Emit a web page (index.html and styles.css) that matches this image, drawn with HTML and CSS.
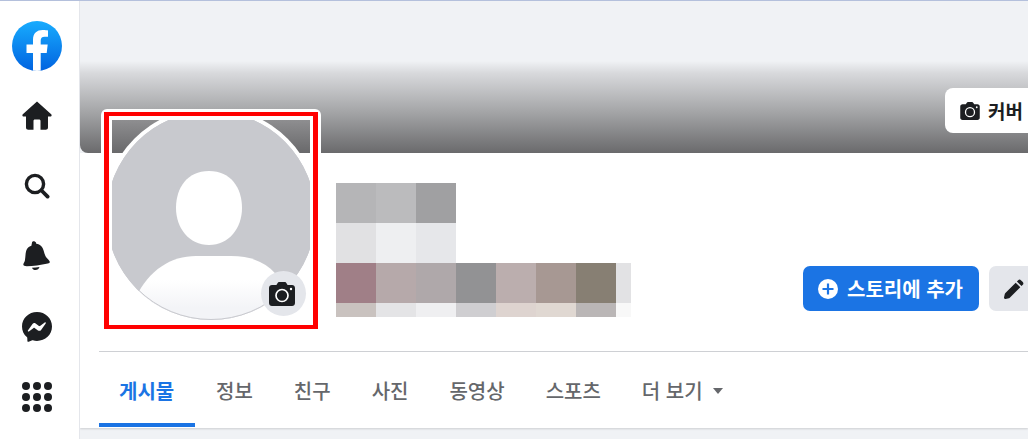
FILE: index.html
```html
<!DOCTYPE html>
<html lang="ko">
<head>
    <meta charset="UTF-8">
    <title>Profile</title>
    <link rel="stylesheet" href="styles.css">
</head>
<body>
    <div class="app">
        <!-- Left icon rail -->
        <nav class="rail">
            <svg class="logo" viewBox="0 0 50 50">
                <defs>
                    <linearGradient id="logoBlue" x1="0" y1="0" x2="0" y2="1">
                        <stop offset="0" stop-color="#18acfe"/>
                        <stop offset="1" stop-color="#0163e0"/>
                    </linearGradient>
                    <clipPath id="logoClip"><circle cx="25" cy="25" r="25"/></clipPath>
                </defs>
                <circle cx="25" cy="25" r="25" fill="url(#logoBlue)"/>
                <path clip-path="url(#logoClip)" fill="#fff" d="M21 50V32h-6.500v-8.500H21v-4.700C21 12.300 24.800 9 30.700 9c2.400 0 4.500.3 5.300.4v6.300h-3.300c-3 0-4 1.400-4 3.700v4.100h7l-1 8.500h-6V50z"/>
            </svg>
            <div class="rail-item">
                <svg width="30" height="29" viewBox="0 0 30 29"><path fill="#1c1e21" d="M15 0.500 0.800 13.200c-.9.900-.3 2.300.9 2.300H4v11c0 1.300 1 2.300 2.300 2.300H11.500v-8.800c0-.8.600-1.400 1.400-1.400h4.200c.8 0 1.400.6 1.400 1.400v8.800h5.200c1.300 0 2.300-1 2.300-2.300v-11h2.300c1.200 0 1.800-1.400.9-2.300z"/></svg>
            </div>
            <div class="rail-item">
                <svg width="26" height="26" viewBox="0 0 26 26"><circle cx="11" cy="11" r="8.600" fill="none" stroke="#1c1e21" stroke-width="3.400"/><path d="M17.500 17.500 23.600 23.600" stroke="#1c1e21" stroke-width="3.800" stroke-linecap="round"/></svg>
            </div>
            <div class="rail-item">
                <svg width="28" height="30" viewBox="0 0 28 30"><path fill="#1c1e21" d="M9 1.500c.2-1 2-1.500 3-.8 1 .5 1.300 1.300 1.200 2 4.300.6 6.400 3.300 7.400 6.800 1 3.500 1.600 6 3.700 8.100 1.400 1.400 2.500 2.500 2.500 3.400 0 .7-.7 1.200-2 1.500-7 1.600-15 2.800-21 2.800-2.200 0-3.500-.5-3.500-1.700 0-1.300 1.200-2.200 1.600-4.200.6-2.900.4-6.700 1.300-9.600.8-2.700 2.700-4.300 5.200-5.100.2-1 .3-1.900.6-3zM9 26.700c2.500 0 5.200-.3 7.500-.7-.6 1.900-2 3-4 3-1.600 0-3-.8-3.500-2.300z"/></svg>
            </div>
            <div class="rail-item">
                <svg width="30" height="30" viewBox="0 0 30 30"><path fill="#1c1e21" d="M15 0C6.700 0 0 6.300 0 14.500c0 4.300 1.800 8 4.800 10.600.5.400.5.800.5 1.500l.1 2.300c0 .7.700 1.100 1.300.8l3-1.300c.5-.2.800-.2 1.200-.1 1.300.4 2.700.6 4.100.6 8.300 0 15-6.200 15-14.400S23.300 0 15 0z"/><path fill="#fff" d="M5.900 18.500 10.500 12c.7-1 2.100-1.300 3.100-.5l3.400 2.500c.3.200.7.200 1 0l4.700-3.500c.6-.5 1.400.2 1 .9l-4.600 6.500c-.7 1-2.100 1.300-3.100.5l-3.400-2.500c-.3-.2-.7-.2-1 0l-4.700 3.500c-.6.500-1.400-.2-1-.9z"/></svg>
            </div>
            <div class="rail-item">
                <div class="dots">
                    <span></span><span></span><span></span>
                    <span></span><span></span><span></span>
                    <span></span><span></span><span></span>
                </div>
            </div>
        </nav>

        <main class="main">
            <div class="cover">
                <button class="cover-btn">
                    <svg width="20" height="18" viewBox="0 0 26 24"><path fill="#1c1e21" d="M8.500 1.200C8.900.500 9.600 0 10.400 0h5.200c.8 0 1.500.5 1.900 1.200L18.600 3h4.400C24.700 3 26 4.300 26 6v15c0 1.700-1.300 3-3 3H3c-1.700 0-3-1.300-3-3V6c0-1.700 1.300-3 3-3h4.400z"/><circle cx="13" cy="13.500" r="6" fill="none" stroke="#fff" stroke-width="1.700"/><circle cx="22" cy="7" r="1.200" fill="#fff"/></svg>
                    <span>커버</span>
                </button>
            </div>

            <!-- Profile picture, hangs over the cover -->
            <div class="avatar-box">
                <div class="avatar-mark">
                    <div class="avatar-strip"></div>
                    <svg class="avatar" viewBox="112 120 198 200">
                        <defs>
                            <clipPath id="avatarClip"><circle cx="211" cy="215.500" r="104.500"/></clipPath>
                            <linearGradient id="bodyFade" x1="0" y1="0" x2="0" y2="1">
                                <stop offset="0.35" stop-color="#fff"/>
                                <stop offset="0.75" stop-color="#f3f4f7"/>
                            </linearGradient>
                        </defs>
                        <circle cx="211" cy="215.500" r="108.500" fill="#fff"/>
                        <circle cx="211" cy="215.500" r="104.500" fill="#c8c9ce"/>
                        <path fill="#fff" d="M209 171C231 171 242 188 242 208 242 228 229 245 209 245 189 245 176 228 176 208 176 188 187 171 209 171z"/>
                        <path clip-path="url(#avatarClip)" fill="url(#bodyFade)" d="M136 297C149 270 171 256 196 256H231C261 256 279 270 289 297V325H136z"/>
                        <circle cx="211" cy="215.500" r="104" fill="none" stroke="#c8c9ce" stroke-width="1"/>
                    </svg>
                    <div class="avatar-cam">
                        <svg width="26" height="24" viewBox="0 0 26 24"><path fill="#1c1e21" d="M8.500 1.200C8.900.500 9.600 0 10.400 0h5.200c.8 0 1.500.5 1.900 1.200L18.600 3h4.400C24.700 3 26 4.300 26 6v15c0 1.700-1.300 3-3 3H3c-1.700 0-3-1.300-3-3V6c0-1.700 1.300-3 3-3h4.400z"/><circle cx="13" cy="13.500" r="6" fill="none" stroke="#fff" stroke-width="1.700"/><circle cx="22" cy="7" r="1.200" fill="#fff"/></svg>
                    </div>
                </div>
            </div>

            <section class="panel">
                <div class="head">
                    <!-- Pixelated name -->
                    <div class="blur">
                        <i class="c1"></i><i class="c2"></i><i class="c3"></i><i class="none"></i><i class="none"></i><i class="none"></i><i class="none"></i><i class="none"></i>
                        <i class="c4"></i><i class="c5"></i><i class="c6"></i><i class="none"></i><i class="none"></i><i class="none"></i><i class="none"></i><i class="none"></i>
                        <i class="c7"></i><i class="c8"></i><i class="c9"></i><i class="c10"></i><i class="c11"></i><i class="c12"></i><i class="c13"></i><i class="c14"></i>
                        <i class="c15"></i><i class="c16"></i><i class="c17"></i><i class="c18"></i><i class="c19"></i><i class="c20"></i><i class="c21"></i><i class="c22"></i>
                    </div>
                    <div class="actions">
                        <button class="btn-blue">
                            <svg width="20" height="20" viewBox="0 0 20 20"><circle cx="10" cy="10" r="10" fill="#fff"/><path d="M10 4.500v11M4.500 10h11" stroke="#1b74e4" stroke-width="2.200"/></svg>
                            <span>스토리에 추가</span>
                        </button>
                        <button class="btn-gray">
                            <svg width="20" height="20" viewBox="0 0 20 20"><path fill="#1c1e21" d="M14.200 1.200c.8-.8 2-.8 2.700 0l1.900 1.900c.8.800.8 2 0 2.700l-1.300 1.300-4.600-4.600zM11.700 3.700l4.600 4.600L6 18.600c-.3.300-.6.500-1 .6l-3.500 .8c-.9.200-1.700-.6-1.500-1.500l.8-3.500c.1-.4.300-.7.600-1z"/></svg>
                        </button>
                    </div>
                </div>
                <div class="tabs">
                    <a class="tab active">게시물</a>
                    <a class="tab">정보</a>
                    <a class="tab">친구</a>
                    <a class="tab">사진</a>
                    <a class="tab">동영상</a>
                    <a class="tab">스포츠</a>
                    <a class="tab">더 보기<b class="caret"></b></a>
                </div>
            </section>
            <div class="below"></div>
        </main>
    </div>
</body>
</html>
```

FILE: styles.css
```css
* {
    box-sizing: border-box;
}
html, body {
    margin: 0;
    height: 100%;
    overflow: hidden;
}
body {
    font-family: "Noto Sans CJK KR", "Noto Sans", sans-serif;
    background-color: #fff;
    color: #1c1e21;
}
.app {
    display: flex;
    height: 439px;
    border-top: 1px solid #b4c0dc;
}
.rail {
    width: 80px;
    flex: none;
    display: flex;
    flex-direction: column;
    align-items: center;
    padding: 20px 6px 0 0;
    border-right: 1px solid #e4e6eb;
    background-color: #fff;
}
.logo {
    width: 50px;
    height: 50px;
    margin-bottom: 9px;
}
.rail-item {
    height: 70.5px;
    display: flex;
    align-items: center;
    justify-content: center;
    flex: none;
}
.dots {
    display: grid;
    grid-template-columns: repeat(3, 8px);
    gap: 3px;
}
.dots span {
    width: 8px;
    height: 8px;
    border-radius: 50%;
    background-color: #1c1e21;
}
.main {
    position: relative;
    flex: 1;
    min-width: 0;
    overflow: hidden;
    background-color: #f0f2f5;
}
.cover {
    position: relative;
    height: 152px;
    border-radius: 0 0 0 8px;
    background: linear-gradient(to bottom, #f0f2f5 0, #f0f2f5 60px, #d8d9dc 72px, #a8a9ab 108px, #6a6a6c 152px);
}
.cover-btn {
    position: absolute;
    left: 865px;
    top: 87px;
    width: 120px;
    height: 45px;
    display: flex;
    align-items: center;
    gap: 8px;
    padding: 0 0 0 15px;
    border: none;
    border-radius: 8px;
    background-color: #fff;
    color: #1c1e21;
    font: 700 19px "Noto Sans CJK KR", sans-serif;
}
.avatar-box {
    position: absolute;
    left: 21px;
    top: 108px;
    width: 220px;
    height: 224px;
    padding: 3px;
    border-radius: 6px 6px 0 0;
    background-color: #fff;
}
.avatar-mark {
    position: relative;
    width: 214px;
    height: 217px;
    border: solid #ff0000;
    border-width: 4px 5px;
    overflow: hidden;
}
.avatar-strip {
    height: 33px;
    margin: 4px 3px 0;
    background: linear-gradient(to bottom, #8e8e90, #69696b);
}
.avatar {
    position: absolute;
    left: 3px;
    top: 4px;
    width: 198px;
    height: 200px;
}
.avatar-cam {
    position: absolute;
    left: 152px;
    top: 155px;
    width: 45px;
    height: 45px;
    display: flex;
    align-items: center;
    justify-content: center;
    border-radius: 50%;
    background-color: #e4e6eb;
}
.avatar-cam svg {
    margin-left: -3px;
}
.panel {
    background-color: #fff;
    height: 275px;
    padding-left: 19px;
    box-shadow: 0 1px 2px rgba(0, 0, 0, 0.15);
}
.head {
    height: 199px;
    display: flex;
    padding: 30px 0 0 237px;
    border-bottom: 1px solid #ced0d4;
}
.blur {
    display: grid;
    grid-template-columns: repeat(7, 40px) 15px;
    grid-template-rows: 40px 40px 40px 14px;
    flex: none;
    align-self: flex-start;
}
.none { background: none; }
.c1 { background-color: #b5b5b7; }
.c2 { background-color: #bbbbbd; }
.c3 { background-color: #a0a0a2; }
.c4 { background-color: #e1e1e3; }
.c5 { background-color: #eeeff1; }
.c6 { background-color: #e6e7ea; }
.c7 { background-color: #a07f87; }
.c8 { background-color: #b6a9aa; }
.c9 { background-color: #afa8aa; }
.c10 { background-color: #929294; }
.c11 { background-color: #bbaeae; }
.c12 { background-color: #a79893; }
.c13 { background-color: #877f73; }
.c14 { background-color: #e2e2e4; }
.c15 { background-color: #c9c2bf; }
.c16 { background-color: #e4e4e6; }
.c17 { background-color: #efeff1; }
.c18 { background-color: #cfced1; }
.c19 { background-color: #ded4d0; }
.c20 { background-color: #e0d8d2; }
.c21 { background-color: #bab6b6; }
.c22 { background-color: #f8f8f8; }
.actions {
    display: flex;
    gap: 10px;
    flex: none;
    margin: 83px 0 0 172px;
    align-self: flex-start;
}
.actions button {
    height: 45px;
    border: none;
    border-radius: 7px;
    display: flex;
    align-items: center;
    font: 700 20px "Noto Sans CJK KR", sans-serif;
}
.btn-blue {
    width: 176px;
    gap: 9px;
    padding: 0 0 0 15px;
    background-color: #1b74e4;
    color: #fff;
}
.btn-gray {
    width: 60px;
    padding: 0 0 0 15px;
    background-color: #e4e6eb;
}
.tabs {
    display: flex;
    height: 75px;
    gap: 1px;
}
.tab {
    display: flex;
    align-items: center;
    gap: 10px;
    padding: 2px 20px 0;
    font-size: 20px;
    font-weight: 500;
    color: #65676b;
    white-space: pre;
}
.tab.active {
    width: 96px;
    color: #1b74e4;
    font-weight: 700;
    border-bottom: 4px solid #1b74e4;
    padding-top: 6px;
}
.caret {
    width: 0;
    height: 0;
    border: solid transparent;
    border-width: 6px 5px 0;
    border-top-color: #65676b;
}
```
